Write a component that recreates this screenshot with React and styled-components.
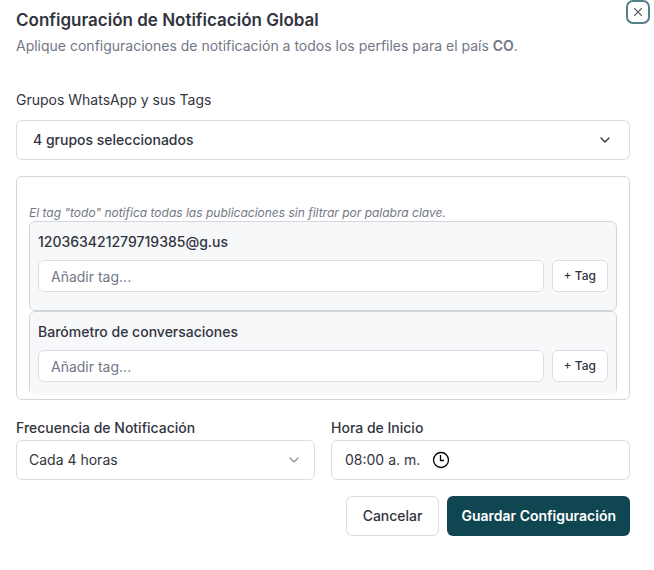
import React, { useState } from "react";
import styled, { createGlobalStyle } from "styled-components";
import { ChevronDown, X } from "lucide-react";

const GlobalStyle = createGlobalStyle`
  *, *::before, *::after { box-sizing: border-box; }
  body {
    margin: 0;
    background: #ffffff;
    color: #32343e;
    font-family: Inter, "Liberation Sans", sans-serif;
    font-size: 14px;
    line-height: 20px;
  }
  button, input, select { font: inherit; color: inherit; }
  h2, p { margin: 0; }
`;

const Dialog = styled.main`
  position: relative;
  display: flex;
  flex-direction: column;
  gap: 16px;
  padding: 6px 24px 32px 16px;
`;

const CloseButton = styled.button`
  position: absolute;
  top: 0;
  right: 4px;
  display: grid;
  place-items: center;
  width: 24px;
  height: 24px;
  padding: 0;
  color: #62646b;
  background: #ffffff;
  border: 2px solid #568087;
  border-radius: 7px;
`;

const Header = styled.header`
  display: flex;
  flex-direction: column;
  gap: 2px;
  margin-bottom: 18px;
`;

const Title = styled.h2`
  font-size: 17px;
  line-height: 28px;
  font-weight: 600;
`;

const Description = styled.p`
  color: #717786;
  strong { font-weight: 600; }
`;

const Field = styled.div`
  display: flex;
  flex-direction: column;
  gap: ${({ $gap }) => $gap}px;
  min-width: 0;
`;

const Label = styled.label`
  font-weight: ${({ $light }) => ($light ? 400 : 500)};
`;

const GroupPicker = styled.button`
  display: flex;
  align-items: center;
  justify-content: space-between;
  height: 40px;
  padding: 0 16px;
  font-weight: 500;
  text-align: left;
  background: #ffffff;
  border: 1px solid #dcdee6;
  border-radius: 6px;
`;

const TagPanel = styled.section`
  padding: 28px 12px 4px;
  border: 1px solid #d1d6dd;
  border-radius: 6px;
`;

const Hint = styled.p`
  font-size: 12px;
  line-height: 16px;
  font-style: italic;
  color: #717786;
`;

const GroupList = styled.div`
  max-height: 174px;
  overflow-y: auto;
  scrollbar-width: none;
  border-radius: 0 0 6px 6px;
`;

const GroupCard = styled.div`
  display: flex;
  flex-direction: column;
  gap: 6px;
  padding: 8px 8px 18px;
  background: #f7f8fa;
  border: 1px solid #d1d6dd;
  border-radius: 6px;
`;

const GroupName = styled.label`
  line-height: 24px;
  font-weight: 500;
`;

const TagRow = styled.div`
  display: flex;
  gap: 8px;
`;

const TagInput = styled.input`
  flex: 1;
  min-width: 0;
  height: 32px;
  padding: 0 12px;
  background: #ffffff;
  border: 1px solid #dcdee6;
  border-radius: 6px;
  &::placeholder { color: #717786; opacity: 1; }
`;

const Button = styled.button`
  height: 40px;
  padding: 0 16px;
  font-weight: 500;
  background: #ffffff;
  border: 1px solid #dcdee6;
  border-radius: 6px;
  white-space: nowrap;
`;

const TagButton = styled(Button)`
  height: 32px;
  padding: 0 11px;
  font-size: 12px;
`;

const PrimaryButton = styled(Button)`
  font-weight: 600;
  color: #ffffff;
  background: #0f4651;
  border: 0;
  padding: 0 14px;
`;

const Schedule = styled.div`
  display: grid;
  grid-template-columns: 1fr 1fr;
  gap: 16px;
  margin-top: 2px;
`;

const SelectWrap = styled.div`
  display: grid;
  align-items: center;
  > * { grid-area: 1 / 1; }
  > svg {
    justify-self: end;
    margin-right: 13px;
    color: #92949a;
    pointer-events: none;
  }
`;

const Select = styled.select`
  appearance: none;
  width: 100%;
  height: 40px;
  padding: 0 36px 0 12px;
  background: #ffffff;
  border: 1px solid #dcdee6;
  border-radius: 6px;
`;

const TimeBox = styled.div`
  display: flex;
  align-items: center;
  gap: 12px;
  height: 40px;
  padding: 0 13px;
  border: 1px solid #dcdee6;
  border-radius: 6px;
`;

const TimeInput = styled.input`
  field-sizing: content;
  padding: 0;
  border: 0;
  background: none;
  outline: none;
`;

const ClockButton = styled.button`
  display: flex;
  padding: 0;
  color: #000000;
  background: none;
  border: 0;
`;

const Actions = styled.footer`
  display: flex;
  justify-content: flex-end;
  gap: 8px;
`;

const groups = [
  { id: "grupo-1", name: "120363421279719385@g.us" },
  { id: "grupo-2", name: "Barómetro de conversaciones" },
];

function ClockIcon() {
  return (
    <svg width="18" height="18" viewBox="0 0 18 18" fill="none" stroke="currentColor" strokeWidth="1.3" aria-hidden="true">
      <circle cx="9" cy="9" r="7.5" />
      <path d="M8.5 4v5.5H12" />
    </svg>
  );
}

function GroupTags({ id, name }) {
  const [tag, setTag] = useState("");
  return (
    <GroupCard>
      <GroupName htmlFor={id}>{name}</GroupName>
      <TagRow>
        <TagInput id={id} placeholder="Añadir tag..." value={tag} onChange={(e) => setTag(e.target.value)} />
        <TagButton type="button">+ Tag</TagButton>
      </TagRow>
    </GroupCard>
  );
}

export default function App() {
  const [time, setTime] = useState("08:00 a. m.");
  return (
    <>
      <GlobalStyle />
      <Dialog>
        <Header>
          <Title>Configuración de Notificación Global</Title>
          <Description>
            Aplique configuraciones de notificación a todos los perfiles para el país <strong>CO</strong>.
          </Description>
        </Header>
        <Field $gap={10}>
          <Label htmlFor="grupos" $light>Grupos WhatsApp y sus Tags</Label>
          <GroupPicker id="grupos" type="button">
            4 grupos seleccionados
            <ChevronDown size={16} />
          </GroupPicker>
        </Field>
        <TagPanel>
          <Hint>El tag "todo" notifica todas las publicaciones sin filtrar por palabra clave.</Hint>
          <GroupList>
            {groups.map((group) => (
              <GroupTags key={group.id} {...group} />
            ))}
          </GroupList>
        </TagPanel>
        <Schedule>
          <Field $gap={2}>
            <Label htmlFor="frecuencia">Frecuencia de Notificación</Label>
            <SelectWrap>
              <Select id="frecuencia" defaultValue="4">
                <option value="4">Cada 4 horas</option>
              </Select>
              <ChevronDown size={16} />
            </SelectWrap>
          </Field>
          <Field $gap={2}>
            <Label htmlFor="hora">Hora de Inicio</Label>
            <TimeBox>
              <TimeInput id="hora" value={time} onChange={(e) => setTime(e.target.value)} />
              <ClockButton type="button" aria-label="Elegir hora">
                <ClockIcon />
              </ClockButton>
            </TimeBox>
          </Field>
        </Schedule>
        <Actions>
          <Button type="button">Cancelar</Button>
          <PrimaryButton type="button">Guardar Configuración</PrimaryButton>
        </Actions>
        <CloseButton type="button" aria-label="Cerrar">
          <X size={14} strokeWidth={2} />
        </CloseButton>
      </Dialog>
    </>
  );
}
